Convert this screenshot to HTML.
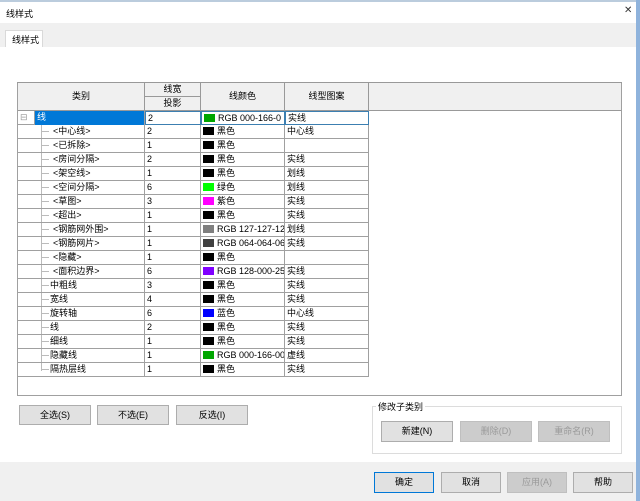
<!DOCTYPE html>
<html><head><meta charset="utf-8"><style>
*{box-sizing:border-box;margin:0;padding:0}
body{width:640px;height:501px;background:#fff;font-family:"Liberation Sans","Noto Sans CJK SC",sans-serif;font-size:9px;color:#000;position:relative;overflow:hidden}
.abs{position:absolute}
.btn{position:absolute;background:#e1e1e1;border:1px solid #adadad;text-align:center;font-size:9px;line-height:18px}
.dis{color:#9a9a9a;background:#ccc;border-color:#bfbfbf}
.row{position:absolute;left:17px;width:352px;height:14px;border-bottom:1px solid #a0a0a0}
.c{position:absolute;top:0;height:14px;line-height:13px;border-right:1px solid #a0a0a0;white-space:nowrap;overflow:hidden}
.sw{display:inline-block;width:11px;height:8px;vertical-align:-1px;margin-right:3px}
</style></head><body>
<div class="abs" style="left:0;top:0;width:640px;height:2px;background:#bcd"></div>
<div class="abs" style="left:6px;top:7px;font-size:9px">线样式</div>
<div class="abs" style="left:624px;top:5px;font-size:10px;color:#333">✕</div>
<div class="abs" style="left:0;top:23px;width:636px;height:24px;background:#f0f0f0"></div>
<div class="abs" style="left:5px;top:30px;width:38px;height:17px;background:#fff;border:1px solid #d9d9d9;border-bottom:none;padding:2px 0 0 6px">线样式</div>
<div class="abs" style="left:636px;top:0;width:4px;height:501px;background:#8fb3dc"></div>
<div class="abs" style="left:0;top:462px;width:636px;height:39px;background:#f0f0f0"></div>
<!-- grid -->
<div class="abs" style="left:17px;top:82px;width:605px;height:314px;border:1px solid #a0a0a0;border-top:2px solid #999"></div>
<div class="abs" style="left:18px;top:83px;width:603px;height:28px;background:#f0f0f0;border-bottom:1px solid #999"></div>
<div class="abs" style="left:18px;top:83px;width:127px;height:28px;border-right:1px solid #999;text-align:center;line-height:27px">类别</div>
<div class="abs" style="left:145px;top:83px;width:56px;height:14px;border-right:1px solid #999;border-bottom:1px solid #999;text-align:center;line-height:13px">线宽</div>
<div class="abs" style="left:145px;top:97px;width:56px;height:14px;border-right:1px solid #999;text-align:center;line-height:13px">投影</div>
<div class="abs" style="left:201px;top:83px;width:84px;height:28px;border-right:1px solid #999;text-align:center;line-height:27px">线颜色</div>
<div class="abs" style="left:285px;top:83px;width:84px;height:28px;border-right:1px solid #999;text-align:center;line-height:27px">线型图案</div>
<div class="abs" style="left:41px;top:125px;height:246px;border-left:1px solid #bbb"></div>
<div id="rows"></div>
<script>
var d=[["线",2,"#00a600","RGB 000-166-0","实线",0],["<中心线>",2,"#000","黑色","中心线",1],["<已拆除>",1,"#000","黑色","",1],["<房间分隔>",2,"#000","黑色","实线",1],["<架空线>",1,"#000","黑色","划线",1],["<空间分隔>",6,"#0f0","绿色","划线",1],["<草图>",3,"#f0f","紫色","实线",1],["<超出>",1,"#000","黑色","实线",1],["<钢筋网外围>",1,"#7f7f7f","RGB 127-127-127","划线",1],["<钢筋网片>",1,"#404040","RGB 064-064-064","实线",1],["<隐藏>",1,"#000","黑色","",1],["<面积边界>",6,"#8000ff","RGB 128-000-255","实线",1],["中粗线",3,"#000","黑色","实线",2],["宽线",4,"#000","黑色","实线",2],["旋转轴",6,"#00f","蓝色","中心线",2],["线",2,"#000","黑色","实线",2],["细线",1,"#000","黑色","实线",2],["隐藏线",1,"#00a600","RGB 000-166-000","虚线",2],["隔热层线",1,"#000","黑色","实线",2]];
var h="";
d.forEach(function(r,i){var y=111+i*14;var esc=function(s){return s.replace(/</g,"&lt;").replace(/>/g,"&gt;")};
h+='<div class="row" style="top:'+y+'px">';
if(i==0){h+='<div class="c" style="left:0;width:18px;color:#999;padding-left:3px">⊟</div><div class="c" style="left:18px;width:110px;background:#0078d7;color:#fff;padding-left:2px">线</div>';}
else{h+='<div class="abs" style="left:24px;top:6px;width:8px;border-top:1px solid #bbb"></div><div class="c" style="left:'+(r[5]==1?36:33)+'px;width:'+(128-(r[5]==1?36:33))+'px">'+esc(r[0])+'</div>';}
var sel=i==0?'border:1px solid #3c7fb1;':'';
h+='<div class="c" style="left:128px;width:56px;padding-left:2px;'+sel+'">'+r[1]+'</div><div class="c" style="left:184px;width:84px;padding-left:2px;'+sel+'"><span class="sw" style="background:'+r[2]+'"></span>'+r[3]+'</div><div class="c" style="left:268px;width:84px;padding-left:2px;'+sel+'">'+r[4]+'</div></div>';});
document.getElementById("rows").innerHTML=h;
</script>
<div class="btn" style="left:19px;top:405px;width:72px;height:20px">全选(S)</div>
<div class="btn" style="left:97px;top:405px;width:72px;height:20px">不选(E)</div>
<div class="btn" style="left:176px;top:405px;width:72px;height:20px">反选(I)</div>
<div class="abs" style="left:372px;top:406px;width:250px;height:48px;border:1px solid #dcdcdc"></div>
<div class="abs" style="left:376px;top:400px;background:#fff;padding:0 2px">修改子类别</div>
<div class="btn" style="left:381px;top:421px;width:72px;height:21px">新建(N)</div>
<div class="btn dis" style="left:460px;top:421px;width:72px;height:21px">删除(D)</div>
<div class="btn dis" style="left:538px;top:421px;width:72px;height:21px">重命名(R)</div>
<div class="btn" style="left:374px;top:472px;width:60px;height:21px;border:1px solid #0078d7">确定</div>
<div class="btn" style="left:441px;top:472px;width:60px;height:21px">取消</div>
<div class="btn dis" style="left:507px;top:472px;width:60px;height:21px">应用(A)</div>
<div class="btn" style="left:573px;top:472px;width:60px;height:21px">帮助</div>
</body></html>
